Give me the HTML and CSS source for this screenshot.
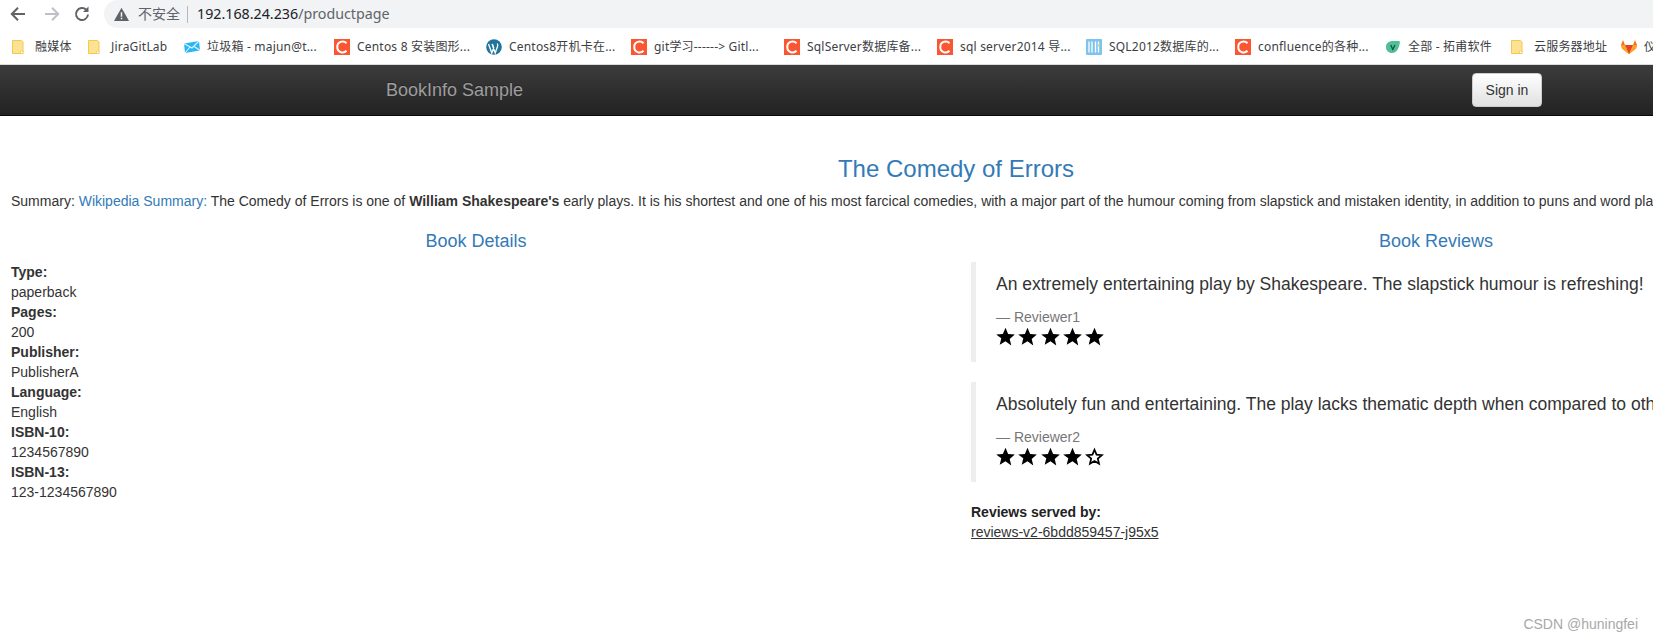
FILE: index.html
```html
<!DOCTYPE html>
<html lang="en">
<head>
<meta charset="utf-8">
<title>Simple Bookstore App</title>
<link rel="stylesheet" href="styles.css">
</head>
<body>
<svg class="defs" width="0" height="0" aria-hidden="true">
  <defs>
    <symbol id="folder" viewBox="0 0 16 16"><path d="M.5 1.500h9l1.500 1.500v11.500H.5z" fill="#fde293" stroke="#f2c94c" stroke-width="1"/><path d="M8.500 14.500v-2.500H11v2.500z" fill="#fff" stroke="#f2c94c" stroke-width=".8"/></symbol>
    <symbol id="csdn" viewBox="0 0 16 16"><rect width="16" height="16" fill="#fc5531"/><path d="M12.500 4.200A5.300 5.300 0 0 0 3.300 8a5.300 5.300 0 0 0 9.200 3.800" fill="none" stroke="#fff" stroke-width="2"/></symbol>
    <symbol id="star" viewBox="0 0 24 24"><path d="M12 .8l3.300 7.900 8.500.7-6.500 5.600 2 8.300L12 18l-7.300 4.400 2-8.300L.2 9.400l8.500-.7z" fill="#000"/></symbol>
    <symbol id="star-o" viewBox="0 0 24 24"><path d="M12 3.500l2.600 6.200 6.700.6-5.100 4.400 1.500 6.500-5.700-3.500-5.700 3.500 1.500-6.500-5.100-4.400 6.700-.6z" fill="#fff" stroke="#000" stroke-width="2.200"/></symbol>
  </defs>
</svg>

<header class="toolbar">
  <svg class="tool tool-back" viewBox="0 0 20 20"><path d="M17 10H4M10 3.800L3.800 10l6.200 6.200" fill="none" stroke="#5f6368" stroke-width="2"/></svg>
  <svg class="tool tool-forward" viewBox="0 0 20 20"><path d="M3 10h13M10 3.800l6.200 6.200-6.200 6.200" fill="none" stroke="#bdc1c6" stroke-width="2"/></svg>
  <svg class="tool tool-reload" viewBox="0 0 20 20"><path d="M16 10.500a6 6 0 1 1-1.800-4.800" fill="none" stroke="#5f6368" stroke-width="2"/><path d="M16.500 2.500v5.500H11z" fill="#5f6368"/></svg>
  <div class="omnibox">
    <svg class="warn" viewBox="0 0 14 14"><path d="M7 .8L14 13H0z" fill="#5f6368"/><path d="M6.300 5h1.400v4.200H6.300zM6.300 10h1.400v1.400H6.300z" fill="#f1f3f4"/></svg>
    <span class="insecure">不安全</span>
    <span class="divider"></span>
    <span class="url"><span class="host">192.168.24.236</span>/productpage</span>
  </div>
</header>

<nav class="bookmarks">
  <a class="bm"><svg class="bm-icon"><use href="#folder"/></svg>融媒体</a>
  <a class="bm"><svg class="bm-icon"><use href="#folder"/></svg>JiraGitLab</a>
  <a class="bm"><svg class="bm-icon" viewBox="0 0 16 16"><path d="M0 4.500L15 2l1 9.500L1 14z" fill="#29b6f6"/><path d="M0 4.500l8 4.500 7-7M1 14l5.500-6.500M16 11.500L9.500 7" fill="none" stroke="#e1f5fe" stroke-width="1.100"/></svg>垃圾箱 - majun@t...</a>
  <a class="bm"><svg class="bm-icon"><use href="#csdn"/></svg>Centos 8 安装图形...</a>
  <a class="bm"><svg class="bm-icon" viewBox="0 0 16 16"><circle cx="8" cy="8" r="7.800" fill="#21759b"/><path d="M2.500 5l3.300 9 1.900-5.200-1.300-3.800M6 5l3.200 9 2.300-6.500c.5-1.300.1-2.500-.6-2.500" fill="none" stroke="#fff" stroke-width="1.300"/></svg>Centos8开机卡在...</a>
  <a class="bm"><svg class="bm-icon"><use href="#csdn"/></svg>git学习------&gt; Gitl...</a>
  <a class="bm"><svg class="bm-icon"><use href="#csdn"/></svg>SqlServer数据库备...</a>
  <a class="bm"><svg class="bm-icon"><use href="#csdn"/></svg>sql server2014 导...</a>
  <a class="bm"><svg class="bm-icon" viewBox="0 0 16 16"><rect width="16" height="16" rx="1" fill="#7cc4ee"/><path d="M3 2.500v11M6 2.500v11M9.500 2.500v11M12.500 2.500v11" stroke="#fff" stroke-width="1.300"/><path d="M12.500 5v3" stroke="#d6e685" stroke-width="1.500"/></svg>SQL2012数据库的...</a>
  <a class="bm"><svg class="bm-icon"><use href="#csdn"/></svg>confluence的各种...</a>
  <a class="bm"><svg class="bm-icon" viewBox="0 0 16 16"><path d="M1 8c0-4 3-6 7-6h6c1 0 1 1 .8 2-.8 5-3 10-7.800 10C3.500 14 1 11.500 1 8z" fill="#4fbf94"/><path d="M5.800 6l2 4.500L10 6" fill="none" stroke="#17504a" stroke-width="1.300"/></svg>全部 - 拓甫软件</a>
  <a class="bm"><svg class="bm-icon"><use href="#folder"/></svg>云服务器地址</a>
  <a class="bm"><svg class="bm-icon" viewBox="0 0 16 16"><path d="M8 15L1 9.500 0 6l2-5 2 5h8l2-5 2 5-1 3.500z" fill="#fc6d26"/><path d="M8 15L4 6h8z" fill="#e24329"/><path d="M8 15L1 9.500 0 6h4zM8 15l7-5.500L16 6h-4z" fill="#fca326"/></svg>仪表盘</a>
</nav>

<div class="viewport">
  <div class="page">
    <div class="navbar">
      <div class="navbar-inner">
        <a class="brand">BookInfo Sample</a>
        <button class="signin" type="button">Sign in</button>
      </div>
    </div>

    <main class="content">
      <h3 class="title">The Comedy of Errors</h3>
      <p class="summary">Summary: <a class="link">Wikipedia Summary:</a> The Comedy of Errors is one of <b>William Shakespeare's</b> early plays. It is his shortest and one of his most farcical comedies, with a major part of the humour coming from slapstick and mistaken identity, in addition to puns and word play.</p>

      <div class="columns">
        <section class="col">
          <h4 class="col-title">Book Details</h4>
          <dl class="details">
            <dt>Type:</dt><dd>paperback</dd>
            <dt>Pages:</dt><dd>200</dd>
            <dt>Publisher:</dt><dd>PublisherA</dd>
            <dt>Language:</dt><dd>English</dd>
            <dt>ISBN-10:</dt><dd>1234567890</dd>
            <dt>ISBN-13:</dt><dd>123-1234567890</dd>
          </dl>
        </section>

        <section class="col">
          <h4 class="col-title">Book Reviews</h4>
          <blockquote class="review">
            <p>An extremely entertaining play by Shakespeare. The slapstick humour is refreshing!</p>
            <footer>— Reviewer1</footer>
            <div class="stars">
              <svg class="star"><use href="#star"/></svg><svg class="star"><use href="#star"/></svg><svg class="star"><use href="#star"/></svg><svg class="star"><use href="#star"/></svg><svg class="star"><use href="#star"/></svg>
            </div>
          </blockquote>
          <blockquote class="review">
            <p>Absolutely fun and entertaining. The play lacks thematic depth when compared to other plays by Shakespeare.</p>
            <footer>— Reviewer2</footer>
            <div class="stars">
              <svg class="star"><use href="#star"/></svg><svg class="star"><use href="#star"/></svg><svg class="star"><use href="#star"/></svg><svg class="star"><use href="#star"/></svg><svg class="star"><use href="#star-o"/></svg>
            </div>
          </blockquote>
          <dl class="served">
            <dt>Reviews served by:</dt>
            <dd><u>reviews-v2-6bdd859457-j95x5</u></dd>
          </dl>
        </section>
      </div>
    </main>
  </div>
</div>

<div class="watermark">CSDN @huningfei</div>
</body>
</html>
```

FILE: styles.css
```css
* { box-sizing: border-box; }

html, body {
  margin: 0;
  height: 100%;
  overflow: hidden;
  background: #fff;
}

body {
  position: relative;
  font-family: "Liberation Sans", Arial, sans-serif;
  font-size: 14px;
  line-height: 20px;
  color: #333;
}

.defs { position: absolute; }

/* Browser chrome */
.toolbar {
  display: flex;
  align-items: center;
  height: 28px;
  padding-left: 8px;
  background: #fff;
}

.tool { width: 20px; height: 20px; flex: none; }
.tool-forward { margin-left: 14px; }
.tool-reload { margin-left: 10px; }

.omnibox {
  flex: 1;
  display: flex;
  align-items: center;
  height: 28px;
  margin-left: 12px;
  padding-left: 10px;
  background: #f1f3f4;
  border-radius: 14px 0 0 14px;
  font-family: "Noto Sans", "Noto Sans CJK SC", sans-serif;
}

.warn { width: 15px; height: 15px; flex: none; }
.insecure { margin-left: 9px; font-size: 14px; color: #5f6368; }
.divider { width: 1px; height: 17px; margin: 0 9px 0 7px; background: #b5b8bc; }
.url { font-size: 14.250px; color: #5f6368; }
.host { color: #202124; }

.bookmarks {
  display: grid;
  grid-template-columns: 76px 96px 150px 152px 145px 153px 153px 149px 149px 150px 126px 110px 60px;
  align-items: center;
  height: 37px;
  padding: 1px 0 0 12px;
  background: #fff;
  border-bottom: 1px solid #dadce0;
  font-family: "Noto Sans", "Noto Sans CJK SC", sans-serif;
  font-size: 12px;
  letter-spacing: .2px;
  color: #3c4043;
  white-space: nowrap;
  overflow: hidden;
}

.bm { display: flex; align-items: center; gap: 7px; }
.bm-icon { width: 16px; height: 16px; flex: none; }

/* Page */
.viewport { overflow: hidden; }
.page { width: 1912px; }

.navbar {
  height: 51px;
  background: linear-gradient(to bottom, #3c3c3c 0%, #222 100%);
  border-bottom: 1px solid #080808;
}

.navbar-inner {
  display: flex;
  align-items: center;
  justify-content: space-between;
  width: 1170px;
  height: 50px;
  margin: 0 auto;
  padding-left: 15px;
}

.brand { font-size: 18px; color: #9d9d9d; text-shadow: 0 -1px 0 rgba(0, 0, 0, .25); }

.signin {
  width: 70px;
  height: 34px;
  margin-right: -1px;
  padding: 0;
  font: inherit;
  color: #333;
  background: linear-gradient(to bottom, #fff 0%, #e0e0e0 100%);
  border: 1px solid #ccc;
  border-radius: 4px;
}

.content { padding: 40px 11px 0; }

.title {
  margin: 0;
  font-size: 24px;
  font-weight: 400;
  line-height: 26px;
  text-align: center;
  color: #337ab7;
}

.summary { margin: 9px 0 0; white-space: nowrap; }
.link { color: #337ab7; }

.columns {
  display: grid;
  grid-template-columns: 1fr 1fr;
  gap: 30px;
  margin-top: 20px;
}

.col { min-width: 0; }

.col-title {
  margin: 0 0 11px;
  font-size: 18px;
  font-weight: 400;
  line-height: 20px;
  text-align: center;
  color: #337ab7;
}

.details, .served { margin: 0; }
dt { font-weight: 700; }
dd { margin: 0; }

.review {
  margin: 0 0 20px;
  padding: 10px 20px;
  border-left: 5px solid #eee;
  white-space: nowrap;
}

.review p { margin: 0 0 10px; font-size: 17.500px; line-height: 25px; }
.review footer { font-size: 14px; line-height: 20px; color: #777; }

.stars { display: flex; height: 25px; }
.star { width: 19px; height: 19px; margin-right: 3.300px; flex: none; }

.served dt { color: #222; }

.watermark {
  position: absolute;
  right: 15px;
  bottom: 7px;
  font-size: 14px;
  color: #a8a8a8;
}
```
